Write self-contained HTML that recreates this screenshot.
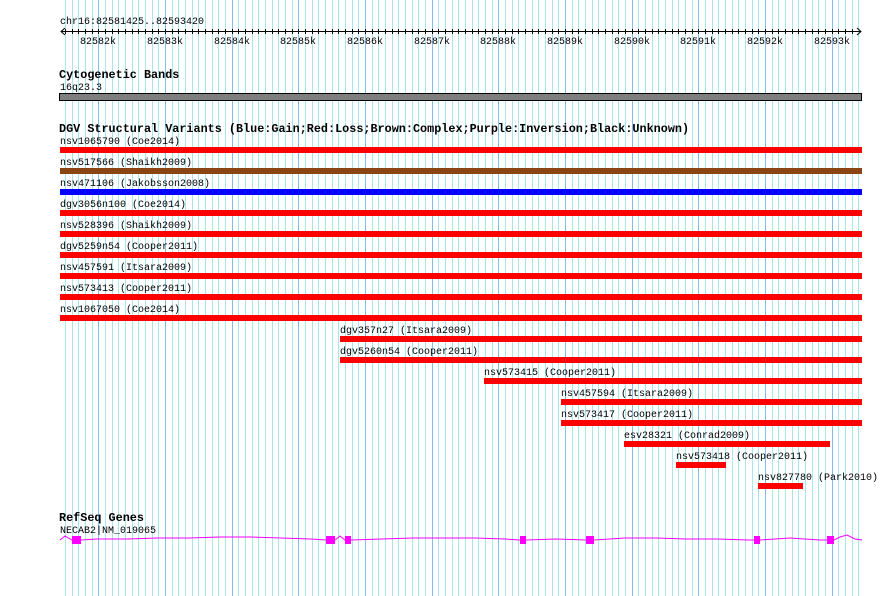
<!DOCTYPE html>
<html><head><style>
html,body{margin:0;padding:0;background:#fff;}
svg{display:block;}
text{font-family:"Liberation Mono","DejaVu Sans Mono",monospace;font-size:10px;fill:#000;}
.b{font-weight:bold;font-size:11.8px;}
</style></head><body>
<svg width="890" height="596" xmlns="http://www.w3.org/2000/svg">
<g id="grid"></g>
<path stroke="#a8e6ee" stroke-width="1" fill="none" d="M65.5 0V596M72.5 0V596M78.5 0V596M85.5 0V596M92.5 0V596M105.5 0V596M112.5 0V596M118.5 0V596M125.5 0V596M132.5 0V596M138.5 0V596M145.5 0V596M152.5 0V596M158.5 0V596M172.5 0V596M178.5 0V596M185.5 0V596M192.5 0V596M198.5 0V596M205.5 0V596M212.5 0V596M218.5 0V596M225.5 0V596M238.5 0V596M245.5 0V596M252.5 0V596M258.5 0V596M265.5 0V596M272.5 0V596M278.5 0V596M285.5 0V596M292.5 0V596M305.5 0V596M312.5 0V596M318.5 0V596M325.5 0V596M332.5 0V596M338.5 0V596M345.5 0V596M352.5 0V596M358.5 0V596M372.5 0V596M378.5 0V596M385.5 0V596M392.5 0V596M398.5 0V596M405.5 0V596M412.5 0V596M418.5 0V596M425.5 0V596M438.5 0V596M445.5 0V596M452.5 0V596M458.5 0V596M465.5 0V596M472.5 0V596M478.5 0V596M485.5 0V596M492.5 0V596M505.5 0V596M512.5 0V596M518.5 0V596M525.5 0V596M532.5 0V596M538.5 0V596M545.5 0V596M552.5 0V596M558.5 0V596M572.5 0V596M578.5 0V596M585.5 0V596M592.5 0V596M598.5 0V596M605.5 0V596M612.5 0V596M618.5 0V596M625.5 0V596M638.5 0V596M645.5 0V596M652.5 0V596M658.5 0V596M665.5 0V596M672.5 0V596M678.5 0V596M685.5 0V596M692.5 0V596M705.5 0V596M712.5 0V596M718.5 0V596M725.5 0V596M732.5 0V596M738.5 0V596M745.5 0V596M752.5 0V596M758.5 0V596M772.5 0V596M778.5 0V596M785.5 0V596M792.5 0V596M798.5 0V596M805.5 0V596M812.5 0V596M818.5 0V596M825.5 0V596M838.5 0V596M845.5 0V596M852.5 0V596M858.5 0V596"/>
<path stroke="#7fbfe8" stroke-width="1" fill="none" d="M98.5 0V596M165.5 0V596M232.5 0V596M298.5 0V596M365.5 0V596M432.5 0V596M498.5 0V596M565.5 0V596M632.5 0V596M698.5 0V596M765.5 0V596M832.5 0V596"/>

<text x="60" y="24">chr16:82581425..82593420</text>
<rect x="61" y="31" width="800" height="1" fill="#000"/>
<path stroke="#000" stroke-width="1" fill="none" d="M65.5 29V34M72.5 29V34M78.5 29V34M85.5 29V34M92.5 29V34M98.5 29V34M105.5 29V34M112.5 29V34M118.5 29V34M125.5 29V34M132.5 29V34M138.5 29V34M145.5 29V34M152.5 29V34M158.5 29V34M165.5 29V34M172.5 29V34M178.5 29V34M185.5 29V34M192.5 29V34M198.5 29V34M205.5 29V34M212.5 29V34M218.5 29V34M225.5 29V34M232.5 29V34M238.5 29V34M245.5 29V34M252.5 29V34M258.5 29V34M265.5 29V34M272.5 29V34M278.5 29V34M285.5 29V34M292.5 29V34M298.5 29V34M305.5 29V34M312.5 29V34M318.5 29V34M325.5 29V34M332.5 29V34M338.5 29V34M345.5 29V34M352.5 29V34M358.5 29V34M365.5 29V34M372.5 29V34M378.5 29V34M385.5 29V34M392.5 29V34M398.5 29V34M405.5 29V34M412.5 29V34M418.5 29V34M425.5 29V34M432.5 29V34M438.5 29V34M445.5 29V34M452.5 29V34M458.5 29V34M465.5 29V34M472.5 29V34M478.5 29V34M485.5 29V34M492.5 29V34M498.5 29V34M505.5 29V34M512.5 29V34M518.5 29V34M525.5 29V34M532.5 29V34M538.5 29V34M545.5 29V34M552.5 29V34M558.5 29V34M565.5 29V34M572.5 29V34M578.5 29V34M585.5 29V34M592.5 29V34M598.5 29V34M605.5 29V34M612.5 29V34M618.5 29V34M625.5 29V34M632.5 29V34M638.5 29V34M645.5 29V34M652.5 29V34M658.5 29V34M665.5 29V34M672.5 29V34M678.5 29V34M685.5 29V34M692.5 29V34M698.5 29V34M705.5 29V34M712.5 29V34M718.5 29V34M725.5 29V34M732.5 29V34M738.5 29V34M745.5 29V34M752.5 29V34M758.5 29V34M765.5 29V34M772.5 29V34M778.5 29V34M785.5 29V34M792.5 29V34M798.5 29V34M805.5 29V34M812.5 29V34M818.5 29V34M825.5 29V34M832.5 29V34M838.5 29V34M845.5 29V34M852.5 29V34"/>
<path d="M65 28 L61 31.5 L65 35 M857 28 L861 31.5 L857 35" stroke="#000" fill="none"/>
<g text-anchor="middle" style="font-size:10.5px">
<text x="98" y="44">82582k</text><text x="165" y="44">82583k</text><text x="232" y="44">82584k</text>
<text x="298" y="44">82585k</text><text x="365" y="44">82586k</text><text x="432" y="44">82587k</text>
<text x="498" y="44">82588k</text><text x="565" y="44">82589k</text><text x="632" y="44">82590k</text>
<text x="698" y="44">82591k</text><text x="765" y="44">82592k</text><text x="832" y="44">82593k</text>
</g>

<text class="b" x="59" y="78">Cytogenetic Bands</text>
<text x="60" y="90">16q23.3</text>
<rect x="59.5" y="93.5" width="802" height="7" fill="#7f7f7f" stroke="#000"/>

<text class="b" x="59" y="132">DGV Structural Variants (Blue:Gain;Red:Loss;Brown:Complex;Purple:Inversion;Black:Unknown)</text>

<text x="60" y="144">nsv1065790 (Coe2014)</text><rect x="60" y="147" width="802" height="6" fill="#f00"/>
<text x="60" y="165">nsv517566 (Shaikh2009)</text><rect x="60" y="168" width="802" height="6" fill="#8b4513"/>
<text x="60" y="186">nsv471106 (Jakobsson2008)</text><rect x="60" y="189" width="802" height="6" fill="#00f"/>
<text x="60" y="207">dgv3056n100 (Coe2014)</text><rect x="60" y="210" width="802" height="6" fill="#f00"/>
<text x="60" y="228">nsv528396 (Shaikh2009)</text><rect x="60" y="231" width="802" height="6" fill="#f00"/>
<text x="60" y="249">dgv5259n54 (Cooper2011)</text><rect x="60" y="252" width="802" height="6" fill="#f00"/>
<text x="60" y="270">nsv457591 (Itsara2009)</text><rect x="60" y="273" width="802" height="6" fill="#f00"/>
<text x="60" y="291">nsv573413 (Cooper2011)</text><rect x="60" y="294" width="802" height="6" fill="#f00"/>
<text x="60" y="312">nsv1067050 (Coe2014)</text><rect x="60" y="315" width="802" height="6" fill="#f00"/>
<text x="340" y="333">dgv357n27 (Itsara2009)</text><rect x="340" y="336" width="522" height="6" fill="#f00"/>
<text x="340" y="354">dgv5260n54 (Cooper2011)</text><rect x="340" y="357" width="522" height="6" fill="#f00"/>
<text x="484" y="375">nsv573415 (Cooper2011)</text><rect x="484" y="378" width="378" height="6" fill="#f00"/>
<text x="561" y="396">nsv457594 (Itsara2009)</text><rect x="561" y="399" width="301" height="6" fill="#f00"/>
<text x="561" y="417">nsv573417 (Cooper2011)</text><rect x="561" y="420" width="301" height="6" fill="#f00"/>
<text x="624" y="438">esv28321 (Conrad2009)</text><rect x="624" y="441" width="206" height="6" fill="#f00"/>
<text x="676" y="459">nsv573418 (Cooper2011)</text><rect x="676" y="462" width="50" height="6" fill="#f00"/>
<text x="758" y="480">nsv827780 (Park2010)</text><rect x="758" y="483" width="45" height="6" fill="#f00"/>

<text class="b" x="59" y="521">RefSeq Genes</text>
<text x="60" y="533">NECAB2|NM_019065</text>
<polyline fill="none" stroke="#f0f" stroke-width="1" points="60,540 65,536 72,540 81,540 97,539 127,539 158,538 189,538 220,537 250,537 281,538 311,539 326,540 335,540 340,536 345,540 351,540 382,539 413,538 444,538 475,538 505,539 520,540 526,540 556,539 586,540 594,540 625,538 656,538 686,539 717,539 748,540 754,540 760,540 790,538 820,540 827,540 834,540 840,537 847,535 855,539 862,540"/>
<g fill="#f0f">
<rect x="72" y="536" width="9" height="8"/><rect x="326" y="536" width="9" height="8"/>
<rect x="345" y="536" width="6" height="8"/><rect x="520" y="536" width="6" height="8"/>
<rect x="586" y="536" width="8" height="8"/><rect x="754" y="536" width="6" height="8"/>
<rect x="827" y="536" width="7" height="8"/>
</g>
</svg>
</body></html>
